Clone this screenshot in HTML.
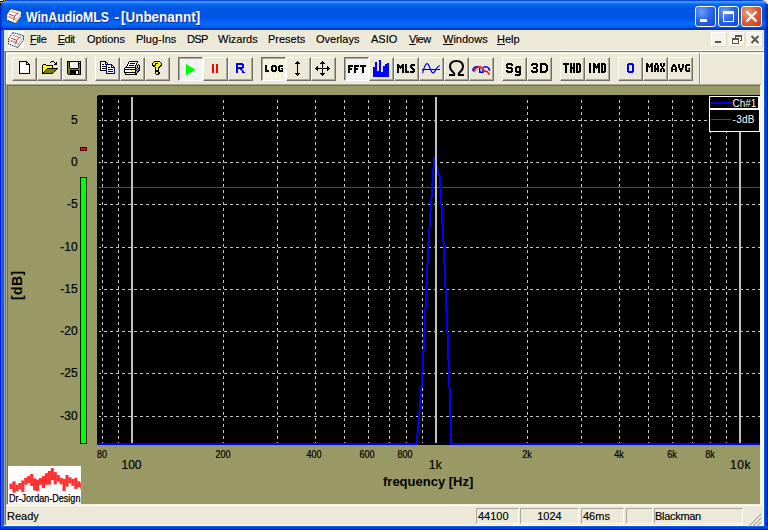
<!DOCTYPE html>
<html><head><meta charset="utf-8"><title>WinAudioMLS</title><style>
*{margin:0;padding:0;box-sizing:border-box}
html,body{width:768px;height:530px;overflow:hidden;background:#0050DC}
body{position:relative;font-family:"Liberation Sans",sans-serif;font-size:11px;color:#000}
.a{position:absolute}
.t{position:absolute;white-space:nowrap;line-height:1}
#title{left:0;top:0;width:768px;height:30px;border-radius:7px 7px 0 0;
background:linear-gradient(#0849DA 0px,#0849DA 0.8px,#3A93FF 1.2px,#3A93FF 2.4px,#1474F8 3.5px,#0662EC 5px,#0057E4 8px,#0055E3 17px,#005CF0 20px,#0268FC 22px,#0268FC 25px,#015CE8 27px,#0038C8 28.5px,#002EBC 30px)}
.btn{position:absolute;top:57px;width:25px;height:24px;background:#ECE9D8;border-top:1px solid #fff;border-left:1px solid #fff;border-bottom:1px solid #716F64;border-right:1px solid #716F64;box-shadow:inset -1px -1px 0 #ACA899}
.btn.dn{border-top:1px solid #716F64;border-left:1px solid #716F64;border-bottom:1px solid #fff;border-right:1px solid #fff;box-shadow:inset 1px 1px 0 #ACA899;background:repeating-conic-gradient(#fff 0 25%,#ECE9D8 0 50%) 0 0/2px 2px}
.btn svg{position:absolute;left:-1px;top:-1px}
.m{position:absolute;top:33px;font-size:11px;line-height:13px;white-space:nowrap;-webkit-text-stroke:0.15px #000}
.m u{text-decoration:underline;text-underline-offset:1px;text-decoration-thickness:1px}
.sp{position:absolute;top:508px;height:16px;border-top:1px solid #ACA899;border-left:1px solid #ACA899;border-bottom:1px solid #fff;border-right:1px solid #fff}
.ax{font-size:12px;-webkit-text-stroke:0.2px #000}
.axs{font-size:10px;transform:scaleX(0.9);transform-origin:50% 0;-webkit-text-stroke:0.2px #000}
</style></head><body>
<div class="a" style="left:0;top:0;width:8px;height:8px;background:#0849DA"></div>
<div class="a" style="left:760px;top:0;width:8px;height:8px;background:#ECE9D8"></div>
<div class="a" id="title"></div>
<div class="a" style="left:0;top:3px;width:3px;height:27px;background:linear-gradient(90deg,rgba(0,25,190,0.85),rgba(0,40,200,0))"></div>
<div class="a" style="left:764px;top:4px;width:4px;height:26px;background:linear-gradient(90deg,rgba(0,30,170,0),rgba(0,20,150,0.9))"></div>
<div class="a" style="left:0px;top:0px;width:3px;height:1px;background:#fff"></div>
<div class="a" style="left:3px;top:0px;width:1px;height:1px;background:#000"></div>
<div class="a" style="left:4px;top:0px;width:1px;height:1px;background:#A89800"></div>
<div class="a" style="left:0px;top:1px;width:3px;height:1px;background:#000"></div>
<div class="a" style="left:0px;top:2px;width:2px;height:1px;background:#A89800"></div>
<div class="a" style="left:0px;top:3px;width:1px;height:2px;background:#000"></div>
<div class="a" style="left:0;top:30px;width:4px;height:500px;background:linear-gradient(90deg,#0019CF 0,#0019CF 1px,#1466EC 1px,#1466EC 3px,#0458E2 3px)"></div>
<div class="a" style="left:764px;top:30px;width:4px;height:500px;background:linear-gradient(90deg,#0A5AE8 0,#0A5AE8 1px,#003CD4 1px,#003CD4 3px,#001E9E 3px)"></div>
<div class="a" style="left:0;top:526px;width:768px;height:4px;background:linear-gradient(#0A5AE8 0,#0A5AE8 1px,#003CD4 1px,#003CD4 3px,#001E9E 3px)"></div>
<div class="a" style="left:0;top:526px;width:1px;height:4px;background:#0019CF"></div>
<div class="a" style="left:4px;top:30px;width:760px;height:496px;background:#ECE9D8"></div>
<div class="a" style="left:4px;top:30px;width:760px;height:1px;background:#F6F2E2"></div>
<div class="a" style="left:4px;top:50px;width:760px;height:1px;background:#fff"></div>
<div class="a" style="left:4px;top:51px;width:760px;height:1px;background:#838172"></div>
<div class="a" style="left:6px;top:53px;width:693px;height:1px;background:#fff"></div>
<div class="a" style="left:6px;top:53px;width:1px;height:31px;background:#fff"></div>
<div class="a" style="left:699px;top:53px;width:1px;height:31px;background:#8E8C7E"></div>
<div class="a" style="left:700px;top:53px;width:1px;height:31px;background:#fff"></div>
<div class="a" style="left:701px;top:53px;width:61px;height:1px;background:#fff"></div>
<div class="a" style="left:4px;top:52px;width:1px;height:474px;background:#ACA899"></div>
<div class="a" style="left:5px;top:52px;width:1px;height:474px;background:#716F64"></div>
<div class="a" style="left:762px;top:52px;width:1px;height:474px;background:#F1EFE2"></div>
<div class="a" style="left:763px;top:52px;width:1px;height:474px;background:#fff"></div>
<div class="a" style="left:4px;top:525px;width:760px;height:1px;background:#fff"></div>
<div class="a" style="left:6px;top:84px;width:756px;height:422px;background:#fff"></div>
<div class="a" style="left:6px;top:84px;width:755px;height:421px;background:#ACA899"></div>
<div class="a" style="left:7px;top:85px;width:754px;height:420px;background:#716F64"></div>
<div class="a" style="left:8px;top:86px;width:752px;height:418px;background:#999966"></div>
<div class="a" style="left:760px;top:85px;width:1px;height:420px;background:#F1EFE2"></div>
<div class="a" style="left:7px;top:504px;width:754px;height:1px;background:#F1EFE2"></div>
<div class="a" style="left:6px;top:505px;width:756px;height:1px;background:#fff"></div>
<svg class="a" style="left:6px;top:8px" width="17" height="17" viewBox="0 0 17 17"><path d="M4.8 0.6 L15.6 3.6 L15.3 8.2 L10 15.6 L0.5 11.9 L0.7 6.4 Z" fill="#fff" stroke="#222" stroke-width="1" stroke-linejoin="round" stroke-dasharray="1.6 0.7"/><path d="M0.9 8.6 L10.3 12.2 L15.2 5.4 M10.3 12.2 L10.1 15.2" stroke="#999" stroke-width="0.8" fill="none"/><path d="M4.6 3.2 L13.2 5.8 M2.6 8.2 L7.4 10" stroke="#888" stroke-width="0.8" fill="none"/><path d="M3 6 L8.6 8.3 L11.8 4.6 M8.6 8.3 L7.5 12.4" stroke="#FF1818" stroke-width="1" fill="none"/></svg>
<div class="t" id="ttl" style="left:26px;top:10px;font-size:14px;font-weight:bold;color:#fff;transform-origin:0 0;text-shadow:1px 1px 0 #0A2A90;transform:scaleX(0.875)">WinAudioMLS</div>
<div class="t" style="left:114.5px;top:10px;font-size:14px;font-weight:bold;color:#fff;transform-origin:0 0;text-shadow:1px 1px 0 #0A2A90;">-</div>
<div class="t" style="left:121px;top:10px;font-size:14px;font-weight:bold;color:#fff;transform-origin:0 0;text-shadow:1px 1px 0 #0A2A90;transform:scaleX(0.96)">[Unbenannt]</div>
<div class="a" style="left:695px;top:6px;width:21px;height:21px;border:1px solid #fff;border-radius:3px;background:radial-gradient(circle at 30% 25%,#6C9CF8 0,#2E66E8 45%,#1444D0 100%)"></div><div class="a" style="left:700px;top:19px;width:7px;height:3px;background:#fff"></div>
<div class="a" style="left:718px;top:6px;width:21px;height:21px;border:1px solid #fff;border-radius:3px;background:radial-gradient(circle at 30% 25%,#6C9CF8 0,#2E66E8 45%,#1444D0 100%)"></div><div class="a" style="left:723px;top:11px;width:11px;height:11px;border:1px solid #fff;border-top:3px solid #fff"></div>
<div class="a" style="left:741px;top:6px;width:21px;height:21px;border:1px solid #fff;border-radius:3px;background:radial-gradient(circle at 30% 30%,#F0A088 0,#E0603C 45%,#C8340E 100%)"></div><svg class="a" style="left:741px;top:6px" width="21" height="21" viewBox="0 0 21 21"><path d="M5.5 5.5 L15.5 15.5 M15.5 5.5 L5.5 15.5" stroke="#fff" stroke-width="2.2" stroke-linecap="butt"/></svg>
<div class="a" style="left:8px;top:31px;width:16px;height:17px;background:#fff"></div>
<svg class="a" style="left:8px;top:32px" width="17" height="17" viewBox="0 0 17 17"><path d="M4.8 0.6 L15.6 3.6 L15.3 8.2 L10 15.6 L0.5 11.9 L0.7 6.4 Z" fill="#fff" stroke="#222" stroke-width="1" stroke-linejoin="round" stroke-dasharray="1.6 0.7"/><path d="M0.9 8.6 L10.3 12.2 L15.2 5.4 M10.3 12.2 L10.1 15.2" stroke="#999" stroke-width="0.8" fill="none"/><path d="M4.6 3.2 L13.2 5.8 M2.6 8.2 L7.4 10" stroke="#888" stroke-width="0.8" fill="none"/><path d="M3 6 L8.6 8.3 L11.8 4.6 M8.6 8.3 L7.5 12.4" stroke="#FF1818" stroke-width="1" fill="none"/></svg>
<div class="m" id="m0" style="left:30px;letter-spacing:-0.3px"><u>F</u>ile</div>
<div class="m" id="m1" style="left:57.7px;letter-spacing:-0.5px"><u>E</u>dit</div>
<div class="m" id="m2" style="left:87px">Options</div>
<div class="m" id="m3" style="left:136px">Plug-Ins</div>
<div class="m" id="m4" style="left:187px;letter-spacing:-0.6px">DSP</div>
<div class="m" id="m5" style="left:218px">Wizards</div>
<div class="m" id="m6" style="left:268px">Presets</div>
<div class="m" id="m7" style="left:316px">Overlays</div>
<div class="m" id="m8" style="left:371px">ASIO</div>
<div class="m" id="m9" style="left:409px;letter-spacing:-0.5px"><u>V</u>iew</div>
<div class="m" id="m10" style="left:443px"><u>W</u>indows</div>
<div class="m" id="m11" style="left:497px"><u>H</u>elp</div>
<div class="a" style="left:711px;top:32px;width:16px;height:15px;background:#F6F4EA;border:1px solid #fff;border-right-color:#E0DCC8;border-bottom-color:#E0DCC8"></div>
<div class="a" style="left:729px;top:32px;width:16px;height:15px;background:#F6F4EA;border:1px solid #fff;border-right-color:#E0DCC8;border-bottom-color:#E0DCC8"></div>
<div class="a" style="left:747px;top:32px;width:16px;height:15px;background:#F6F4EA;border:1px solid #fff;border-right-color:#E0DCC8;border-bottom-color:#E0DCC8"></div>
<div class="a" style="left:715px;top:41px;width:6px;height:2px;background:#555"></div>
<svg class="a" style="left:729px;top:32px" width="16" height="15" viewBox="0 0 16 15"><g fill="none" stroke="#555" stroke-width="1" shape-rendering="crispEdges"><path d="M6.5 5.5 V3.5 H12.5 V8.5 H10.5"/><path d="M6 4.5 H13"/><rect x="3.5" y="6.5" width="6" height="5"/><path d="M3 7.5 H10"/></g></svg>
<svg class="a" style="left:747px;top:32px" width="16" height="15" viewBox="0 0 16 15"><path d="M4.5 4 L11.5 11 M11.5 4 L4.5 11" stroke="#555" stroke-width="2"/></svg>
<div class="btn" id="b12" style="left:12px"><svg width="25" height="24" viewBox="0 0 25 24" shape-rendering="crispEdges"><rect x="7" y="4" width="8" height="1" fill="#000"/><rect x="7" y="5" width="1" height="1" fill="#000"/><rect x="8" y="5" width="6" height="1" fill="#fff"/><rect x="14" y="5" width="2" height="1" fill="#000"/><rect x="7" y="6" width="1" height="1" fill="#000"/><rect x="8" y="6" width="6" height="1" fill="#fff"/><rect x="14" y="6" width="1" height="1" fill="#000"/><rect x="15" y="6" width="1" height="1" fill="#fff"/><rect x="16" y="6" width="1" height="1" fill="#000"/><rect x="7" y="7" width="1" height="1" fill="#000"/><rect x="8" y="7" width="6" height="1" fill="#fff"/><rect x="14" y="7" width="4" height="1" fill="#000"/><rect x="7" y="8" width="1" height="1" fill="#000"/><rect x="8" y="8" width="9" height="1" fill="#fff"/><rect x="17" y="8" width="1" height="1" fill="#000"/><rect x="7" y="9" width="1" height="1" fill="#000"/><rect x="8" y="9" width="9" height="1" fill="#fff"/><rect x="17" y="9" width="1" height="1" fill="#000"/><rect x="7" y="10" width="1" height="1" fill="#000"/><rect x="8" y="10" width="9" height="1" fill="#fff"/><rect x="17" y="10" width="1" height="1" fill="#000"/><rect x="7" y="11" width="1" height="1" fill="#000"/><rect x="8" y="11" width="9" height="1" fill="#fff"/><rect x="17" y="11" width="1" height="1" fill="#000"/><rect x="7" y="12" width="1" height="1" fill="#000"/><rect x="8" y="12" width="9" height="1" fill="#fff"/><rect x="17" y="12" width="1" height="1" fill="#000"/><rect x="7" y="13" width="1" height="1" fill="#000"/><rect x="8" y="13" width="9" height="1" fill="#fff"/><rect x="17" y="13" width="1" height="1" fill="#000"/><rect x="7" y="14" width="1" height="1" fill="#000"/><rect x="8" y="14" width="9" height="1" fill="#fff"/><rect x="17" y="14" width="1" height="1" fill="#000"/><rect x="7" y="15" width="1" height="1" fill="#000"/><rect x="8" y="15" width="9" height="1" fill="#fff"/><rect x="17" y="15" width="1" height="1" fill="#000"/><rect x="7" y="16" width="11" height="1" fill="#000"/></svg></div>
<div class="btn" id="b37" style="left:37px"><svg width="25" height="24" viewBox="0 0 25 24" shape-rendering="crispEdges"><rect x="14" y="4" width="3" height="1" fill="#000"/><rect x="13" y="5" width="1" height="1" fill="#000"/><rect x="17" y="5" width="1" height="1" fill="#000"/><rect x="19" y="5" width="1" height="1" fill="#000"/><rect x="18" y="6" width="2" height="1" fill="#000"/><rect x="6" y="7" width="3" height="1" fill="#000"/><rect x="17" y="7" width="3" height="1" fill="#000"/><rect x="5" y="8" width="1" height="1" fill="#000"/><rect x="6" y="8" width="1" height="1" fill="#FFFF00"/><rect x="7" y="8" width="1" height="1" fill="#fff"/><rect x="8" y="8" width="1" height="1" fill="#FFFF00"/><rect x="9" y="8" width="7" height="1" fill="#000"/><rect x="5" y="9" width="1" height="1" fill="#000"/><rect x="6" y="9" width="1" height="1" fill="#fff"/><rect x="7" y="9" width="1" height="1" fill="#FFFF00"/><rect x="8" y="9" width="1" height="1" fill="#fff"/><rect x="9" y="9" width="1" height="1" fill="#FFFF00"/><rect x="10" y="9" width="1" height="1" fill="#fff"/><rect x="11" y="9" width="1" height="1" fill="#FFFF00"/><rect x="12" y="9" width="1" height="1" fill="#fff"/><rect x="13" y="9" width="1" height="1" fill="#FFFF00"/><rect x="14" y="9" width="1" height="1" fill="#fff"/><rect x="15" y="9" width="1" height="1" fill="#000"/><rect x="5" y="10" width="1" height="1" fill="#000"/><rect x="6" y="10" width="1" height="1" fill="#FFFF00"/><rect x="7" y="10" width="1" height="1" fill="#fff"/><rect x="8" y="10" width="1" height="1" fill="#FFFF00"/><rect x="9" y="10" width="1" height="1" fill="#fff"/><rect x="10" y="10" width="1" height="1" fill="#FFFF00"/><rect x="11" y="10" width="1" height="1" fill="#fff"/><rect x="12" y="10" width="1" height="1" fill="#FFFF00"/><rect x="13" y="10" width="1" height="1" fill="#fff"/><rect x="14" y="10" width="1" height="1" fill="#FFFF00"/><rect x="15" y="10" width="1" height="1" fill="#000"/><rect x="5" y="11" width="1" height="1" fill="#000"/><rect x="6" y="11" width="1" height="1" fill="#fff"/><rect x="7" y="11" width="1" height="1" fill="#FFFF00"/><rect x="8" y="11" width="1" height="1" fill="#fff"/><rect x="9" y="11" width="1" height="1" fill="#FFFF00"/><rect x="10" y="11" width="11" height="1" fill="#000"/><rect x="5" y="12" width="1" height="1" fill="#000"/><rect x="6" y="12" width="1" height="1" fill="#FFFF00"/><rect x="7" y="12" width="1" height="1" fill="#fff"/><rect x="8" y="12" width="1" height="1" fill="#FFFF00"/><rect x="9" y="12" width="1" height="1" fill="#000"/><rect x="10" y="12" width="9" height="1" fill="#808000"/><rect x="19" y="12" width="1" height="1" fill="#000"/><rect x="5" y="13" width="1" height="1" fill="#000"/><rect x="6" y="13" width="1" height="1" fill="#fff"/><rect x="7" y="13" width="1" height="1" fill="#FFFF00"/><rect x="8" y="13" width="1" height="1" fill="#000"/><rect x="9" y="13" width="9" height="1" fill="#808000"/><rect x="18" y="13" width="1" height="1" fill="#000"/><rect x="5" y="14" width="1" height="1" fill="#000"/><rect x="6" y="14" width="1" height="1" fill="#FFFF00"/><rect x="7" y="14" width="1" height="1" fill="#000"/><rect x="8" y="14" width="9" height="1" fill="#808000"/><rect x="17" y="14" width="1" height="1" fill="#000"/><rect x="5" y="15" width="2" height="1" fill="#000"/><rect x="7" y="15" width="9" height="1" fill="#808000"/><rect x="16" y="15" width="1" height="1" fill="#000"/><rect x="5" y="16" width="11" height="1" fill="#000"/></svg></div>
<div class="btn" id="b62" style="left:62px"><svg width="25" height="24" viewBox="0 0 25 24" shape-rendering="crispEdges"><rect x="5" y="4" width="14" height="1" fill="#000"/><rect x="5" y="5" width="1" height="1" fill="#000"/><rect x="6" y="5" width="1" height="1" fill="#808000"/><rect x="7" y="5" width="1" height="1" fill="#000"/><rect x="8" y="5" width="8" height="1" fill="#F4F2EA"/><rect x="16" y="5" width="1" height="1" fill="#000"/><rect x="17" y="5" width="1" height="1" fill="#F4F2EA"/><rect x="18" y="5" width="1" height="1" fill="#000"/><rect x="5" y="6" width="1" height="1" fill="#000"/><rect x="6" y="6" width="1" height="1" fill="#808000"/><rect x="7" y="6" width="1" height="1" fill="#000"/><rect x="8" y="6" width="8" height="1" fill="#F4F2EA"/><rect x="16" y="6" width="3" height="1" fill="#000"/><rect x="5" y="7" width="1" height="1" fill="#000"/><rect x="6" y="7" width="1" height="1" fill="#808000"/><rect x="7" y="7" width="1" height="1" fill="#000"/><rect x="8" y="7" width="8" height="1" fill="#F4F2EA"/><rect x="16" y="7" width="1" height="1" fill="#000"/><rect x="17" y="7" width="1" height="1" fill="#808000"/><rect x="18" y="7" width="1" height="1" fill="#000"/><rect x="5" y="8" width="1" height="1" fill="#000"/><rect x="6" y="8" width="1" height="1" fill="#808000"/><rect x="7" y="8" width="1" height="1" fill="#000"/><rect x="8" y="8" width="8" height="1" fill="#F4F2EA"/><rect x="16" y="8" width="1" height="1" fill="#000"/><rect x="17" y="8" width="1" height="1" fill="#808000"/><rect x="18" y="8" width="1" height="1" fill="#000"/><rect x="5" y="9" width="1" height="1" fill="#000"/><rect x="6" y="9" width="1" height="1" fill="#808000"/><rect x="7" y="9" width="1" height="1" fill="#000"/><rect x="8" y="9" width="8" height="1" fill="#F4F2EA"/><rect x="16" y="9" width="1" height="1" fill="#000"/><rect x="17" y="9" width="1" height="1" fill="#808000"/><rect x="18" y="9" width="1" height="1" fill="#000"/><rect x="5" y="10" width="1" height="1" fill="#000"/><rect x="6" y="10" width="1" height="1" fill="#808000"/><rect x="7" y="10" width="1" height="1" fill="#000"/><rect x="8" y="10" width="8" height="1" fill="#F4F2EA"/><rect x="16" y="10" width="1" height="1" fill="#000"/><rect x="17" y="10" width="1" height="1" fill="#808000"/><rect x="18" y="10" width="1" height="1" fill="#000"/><rect x="5" y="11" width="1" height="1" fill="#000"/><rect x="6" y="11" width="2" height="1" fill="#808000"/><rect x="8" y="11" width="8" height="1" fill="#000"/><rect x="16" y="11" width="2" height="1" fill="#808000"/><rect x="18" y="11" width="1" height="1" fill="#000"/><rect x="5" y="12" width="1" height="1" fill="#000"/><rect x="6" y="12" width="12" height="1" fill="#808000"/><rect x="18" y="12" width="1" height="1" fill="#000"/><rect x="5" y="13" width="1" height="1" fill="#000"/><rect x="6" y="13" width="2" height="1" fill="#808000"/><rect x="8" y="13" width="9" height="1" fill="#000"/><rect x="17" y="13" width="1" height="1" fill="#808000"/><rect x="18" y="13" width="1" height="1" fill="#000"/><rect x="5" y="14" width="1" height="1" fill="#000"/><rect x="6" y="14" width="2" height="1" fill="#808000"/><rect x="8" y="14" width="6" height="1" fill="#000"/><rect x="14" y="14" width="2" height="1" fill="#F4F2EA"/><rect x="16" y="14" width="1" height="1" fill="#000"/><rect x="17" y="14" width="1" height="1" fill="#808000"/><rect x="18" y="14" width="1" height="1" fill="#000"/><rect x="5" y="15" width="1" height="1" fill="#000"/><rect x="6" y="15" width="2" height="1" fill="#808000"/><rect x="8" y="15" width="6" height="1" fill="#000"/><rect x="14" y="15" width="2" height="1" fill="#F4F2EA"/><rect x="16" y="15" width="1" height="1" fill="#000"/><rect x="17" y="15" width="1" height="1" fill="#808000"/><rect x="18" y="15" width="1" height="1" fill="#000"/><rect x="5" y="16" width="1" height="1" fill="#000"/><rect x="6" y="16" width="2" height="1" fill="#808000"/><rect x="8" y="16" width="6" height="1" fill="#000"/><rect x="14" y="16" width="2" height="1" fill="#F4F2EA"/><rect x="16" y="16" width="1" height="1" fill="#000"/><rect x="17" y="16" width="1" height="1" fill="#808000"/><rect x="18" y="16" width="1" height="1" fill="#000"/><rect x="6" y="17" width="13" height="1" fill="#000"/></svg></div>
<div class="btn" id="b95" style="left:95px"><svg width="25" height="24" viewBox="0 0 25 24" shape-rendering="crispEdges"><rect x="5" y="4" width="6" height="1" fill="#000"/><rect x="5" y="5" width="1" height="1" fill="#000"/><rect x="6" y="5" width="4" height="1" fill="#fff"/><rect x="10" y="5" width="2" height="1" fill="#000"/><rect x="5" y="6" width="1" height="1" fill="#000"/><rect x="6" y="6" width="4" height="1" fill="#fff"/><rect x="10" y="6" width="1" height="1" fill="#000"/><rect x="11" y="6" width="1" height="1" fill="#fff"/><rect x="12" y="6" width="1" height="1" fill="#000"/><rect x="5" y="7" width="1" height="1" fill="#000"/><rect x="6" y="7" width="1" height="1" fill="#fff"/><rect x="7" y="7" width="2" height="1" fill="#000"/><rect x="9" y="7" width="1" height="1" fill="#fff"/><rect x="10" y="7" width="1" height="1" fill="#000"/><rect x="11" y="7" width="6" height="1" fill="#000080"/><rect x="5" y="8" width="1" height="1" fill="#000"/><rect x="6" y="8" width="5" height="1" fill="#fff"/><rect x="11" y="8" width="1" height="1" fill="#000080"/><rect x="12" y="8" width="4" height="1" fill="#fff"/><rect x="16" y="8" width="2" height="1" fill="#000080"/><rect x="5" y="9" width="1" height="1" fill="#000"/><rect x="6" y="9" width="1" height="1" fill="#fff"/><rect x="7" y="9" width="4" height="1" fill="#000"/><rect x="11" y="9" width="1" height="1" fill="#000080"/><rect x="12" y="9" width="4" height="1" fill="#fff"/><rect x="16" y="9" width="1" height="1" fill="#000080"/><rect x="17" y="9" width="1" height="1" fill="#fff"/><rect x="18" y="9" width="1" height="1" fill="#000080"/><rect x="5" y="10" width="1" height="1" fill="#000"/><rect x="6" y="10" width="5" height="1" fill="#fff"/><rect x="11" y="10" width="1" height="1" fill="#000080"/><rect x="12" y="10" width="1" height="1" fill="#fff"/><rect x="13" y="10" width="2" height="1" fill="#000"/><rect x="15" y="10" width="1" height="1" fill="#fff"/><rect x="16" y="10" width="4" height="1" fill="#000080"/><rect x="5" y="11" width="1" height="1" fill="#000"/><rect x="6" y="11" width="1" height="1" fill="#fff"/><rect x="7" y="11" width="4" height="1" fill="#000"/><rect x="11" y="11" width="1" height="1" fill="#000080"/><rect x="12" y="11" width="7" height="1" fill="#fff"/><rect x="19" y="11" width="1" height="1" fill="#000080"/><rect x="5" y="12" width="1" height="1" fill="#000"/><rect x="6" y="12" width="5" height="1" fill="#fff"/><rect x="11" y="12" width="1" height="1" fill="#000080"/><rect x="12" y="12" width="1" height="1" fill="#fff"/><rect x="13" y="12" width="5" height="1" fill="#000"/><rect x="18" y="12" width="1" height="1" fill="#fff"/><rect x="19" y="12" width="1" height="1" fill="#000080"/><rect x="5" y="13" width="6" height="1" fill="#000"/><rect x="11" y="13" width="1" height="1" fill="#000080"/><rect x="12" y="13" width="7" height="1" fill="#fff"/><rect x="19" y="13" width="1" height="1" fill="#000080"/><rect x="11" y="14" width="1" height="1" fill="#000080"/><rect x="12" y="14" width="1" height="1" fill="#fff"/><rect x="13" y="14" width="5" height="1" fill="#000"/><rect x="18" y="14" width="1" height="1" fill="#fff"/><rect x="19" y="14" width="1" height="1" fill="#000080"/><rect x="11" y="15" width="1" height="1" fill="#000080"/><rect x="12" y="15" width="7" height="1" fill="#fff"/><rect x="19" y="15" width="1" height="1" fill="#000080"/><rect x="11" y="16" width="9" height="1" fill="#000080"/></svg></div>
<div class="btn" id="b120" style="left:120px"><svg width="25" height="24" viewBox="0 0 25 24" shape-rendering="crispEdges"><rect x="9" y="4" width="9" height="1" fill="#000"/><rect x="8" y="5" width="1" height="1" fill="#000"/><rect x="9" y="5" width="8" height="1" fill="#fff"/><rect x="17" y="5" width="1" height="1" fill="#000"/><rect x="8" y="6" width="1" height="1" fill="#000"/><rect x="9" y="6" width="1" height="1" fill="#fff"/><rect x="10" y="6" width="5" height="1" fill="#000"/><rect x="15" y="6" width="1" height="1" fill="#fff"/><rect x="16" y="6" width="1" height="1" fill="#000"/><rect x="7" y="7" width="1" height="1" fill="#000"/><rect x="8" y="7" width="8" height="1" fill="#fff"/><rect x="16" y="7" width="1" height="1" fill="#000"/><rect x="18" y="7" width="1" height="1" fill="#000"/><rect x="7" y="8" width="1" height="1" fill="#000"/><rect x="8" y="8" width="1" height="1" fill="#fff"/><rect x="9" y="8" width="5" height="1" fill="#000"/><rect x="14" y="8" width="1" height="1" fill="#fff"/><rect x="15" y="8" width="1" height="1" fill="#000"/><rect x="16" y="8" width="1" height="1" fill="#C8C8C0"/><rect x="17" y="8" width="1" height="1" fill="#000"/><rect x="18" y="8" width="1" height="1" fill="#C8C8C0"/><rect x="19" y="8" width="1" height="1" fill="#000"/><rect x="6" y="9" width="1" height="1" fill="#000"/><rect x="7" y="9" width="8" height="1" fill="#fff"/><rect x="15" y="9" width="1" height="1" fill="#000"/><rect x="16" y="9" width="1" height="1" fill="#C8C8C0"/><rect x="17" y="9" width="1" height="1" fill="#000"/><rect x="18" y="9" width="1" height="1" fill="#C8C8C0"/><rect x="19" y="9" width="1" height="1" fill="#000"/><rect x="5" y="10" width="11" height="1" fill="#000"/><rect x="16" y="10" width="1" height="1" fill="#C8C8C0"/><rect x="17" y="10" width="1" height="1" fill="#000"/><rect x="18" y="10" width="1" height="1" fill="#C8C8C0"/><rect x="19" y="10" width="1" height="1" fill="#000"/><rect x="4" y="11" width="1" height="1" fill="#000"/><rect x="5" y="11" width="10" height="1" fill="#F6F4EA"/><rect x="15" y="11" width="2" height="1" fill="#000"/><rect x="17" y="11" width="1" height="1" fill="#C8C8C0"/><rect x="18" y="11" width="2" height="1" fill="#000"/><rect x="4" y="12" width="12" height="1" fill="#000"/><rect x="16" y="12" width="1" height="1" fill="#C8C8C0"/><rect x="17" y="12" width="1" height="1" fill="#000"/><rect x="18" y="12" width="1" height="1" fill="#C8C8C0"/><rect x="19" y="12" width="1" height="1" fill="#000"/><rect x="4" y="13" width="1" height="1" fill="#000"/><rect x="5" y="13" width="6" height="1" fill="#fff"/><rect x="11" y="13" width="3" height="1" fill="#FFFF00"/><rect x="14" y="13" width="1" height="1" fill="#fff"/><rect x="15" y="13" width="2" height="1" fill="#000"/><rect x="17" y="13" width="1" height="1" fill="#C8C8C0"/><rect x="18" y="13" width="2" height="1" fill="#000"/><rect x="4" y="14" width="1" height="1" fill="#000"/><rect x="5" y="14" width="6" height="1" fill="#fff"/><rect x="11" y="14" width="3" height="1" fill="#FFFF00"/><rect x="14" y="14" width="1" height="1" fill="#fff"/><rect x="15" y="14" width="1" height="1" fill="#000"/><rect x="16" y="14" width="1" height="1" fill="#C8C8C0"/><rect x="17" y="14" width="2" height="1" fill="#000"/><rect x="4" y="15" width="12" height="1" fill="#000"/><rect x="16" y="15" width="1" height="1" fill="#C8C8C0"/><rect x="17" y="15" width="1" height="1" fill="#000"/><rect x="5" y="16" width="1" height="1" fill="#000"/><rect x="6" y="16" width="9" height="1" fill="#F6F4EA"/><rect x="15" y="16" width="2" height="1" fill="#000"/><rect x="5" y="17" width="12" height="1" fill="#000"/></svg></div>
<div class="btn" id="b145" style="left:145px"><svg width="25" height="24" viewBox="0 0 25 24" shape-rendering="crispEdges"><rect x="9" y="4" width="6" height="1" fill="#000"/><rect x="8" y="5" width="1" height="1" fill="#000"/><rect x="9" y="5" width="6" height="1" fill="#FFFF00"/><rect x="15" y="5" width="1" height="1" fill="#000"/><rect x="7" y="6" width="1" height="1" fill="#000"/><rect x="8" y="6" width="2" height="1" fill="#FFFF00"/><rect x="10" y="6" width="3" height="1" fill="#000"/><rect x="13" y="6" width="3" height="1" fill="#FFFF00"/><rect x="16" y="6" width="1" height="1" fill="#000"/><rect x="7" y="7" width="1" height="1" fill="#000"/><rect x="8" y="7" width="2" height="1" fill="#FFFF00"/><rect x="10" y="7" width="1" height="1" fill="#000"/><rect x="13" y="7" width="3" height="1" fill="#FFFF00"/><rect x="16" y="7" width="1" height="1" fill="#000"/><rect x="7" y="8" width="4" height="1" fill="#000"/><rect x="12" y="8" width="3" height="1" fill="#FFFF00"/><rect x="15" y="8" width="2" height="1" fill="#000"/><rect x="8" y="9" width="2" height="1" fill="#000"/><rect x="11" y="9" width="3" height="1" fill="#FFFF00"/><rect x="14" y="9" width="2" height="1" fill="#000"/><rect x="10" y="10" width="1" height="1" fill="#000"/><rect x="11" y="10" width="2" height="1" fill="#FFFF00"/><rect x="13" y="10" width="2" height="1" fill="#000"/><rect x="10" y="11" width="1" height="1" fill="#000"/><rect x="11" y="11" width="2" height="1" fill="#FFFF00"/><rect x="13" y="11" width="1" height="1" fill="#000"/><rect x="10" y="12" width="1" height="1" fill="#000"/><rect x="11" y="12" width="2" height="1" fill="#FFFF00"/><rect x="13" y="12" width="1" height="1" fill="#000"/><rect x="10" y="13" width="4" height="1" fill="#000"/><rect x="10" y="14" width="4" height="1" fill="#000"/><rect x="10" y="15" width="1" height="1" fill="#000"/><rect x="11" y="15" width="2" height="1" fill="#FFFF00"/><rect x="13" y="15" width="2" height="1" fill="#000"/><rect x="10" y="16" width="1" height="1" fill="#000"/><rect x="11" y="16" width="2" height="1" fill="#FFFF00"/><rect x="13" y="16" width="2" height="1" fill="#000"/><rect x="11" y="17" width="3" height="1" fill="#000"/></svg></div>
<div class="btn dn" id="b178" style="left:178px"><svg width="25" height="24" viewBox="0 0 25 24" shape-rendering="crispEdges"><path d="M8 7 L8 18.6 L17.6 12.8 Z" fill="#00FF00" shape-rendering="geometricPrecision"/></svg></div>
<div class="btn" id="b203" style="left:203px"><svg width="25" height="24" viewBox="0 0 25 24" shape-rendering="crispEdges"><rect x="9" y="7" width="2" height="9" fill="#FF0000"/><rect x="13" y="7" width="2" height="9" fill="#FF0000"/></svg></div>
<div class="btn" id="b228" style="left:228px"><svg width="25" height="24" viewBox="0 0 25 24" shape-rendering="crispEdges"><rect x="8" y="6" width="7" height="1" fill="#0000FF"/><rect x="8" y="7" width="8" height="1" fill="#0000FF"/><rect x="8" y="8" width="2" height="1" fill="#0000FF"/><rect x="14" y="8" width="2" height="1" fill="#0000FF"/><rect x="8" y="9" width="2" height="1" fill="#0000FF"/><rect x="14" y="9" width="2" height="1" fill="#0000FF"/><rect x="8" y="10" width="8" height="1" fill="#0000FF"/><rect x="8" y="11" width="7" height="1" fill="#0000FF"/><rect x="8" y="12" width="2" height="1" fill="#0000FF"/><rect x="12" y="12" width="2" height="1" fill="#0000FF"/><rect x="8" y="13" width="2" height="1" fill="#0000FF"/><rect x="13" y="13" width="2" height="1" fill="#0000FF"/><rect x="8" y="14" width="2" height="1" fill="#0000FF"/><rect x="14" y="14" width="2" height="1" fill="#0000FF"/><rect x="8" y="15" width="2" height="1" fill="#0000FF"/><rect x="14" y="15" width="3" height="1" fill="#0000FF"/></svg></div>
<div class="btn dn" id="b261" style="left:261px"><svg width="25" height="24" viewBox="0 0 25 24" shape-rendering="crispEdges"><rect x="4" y="8" width="2" height="1" fill="#000"/><rect x="4" y="9" width="2" height="1" fill="#000"/><rect x="4" y="10" width="2" height="1" fill="#000"/><rect x="4" y="11" width="2" height="1" fill="#000"/><rect x="4" y="12" width="2" height="1" fill="#000"/><rect x="4" y="13" width="4" height="1" fill="#000"/><rect x="4" y="14" width="4" height="1" fill="#000"/><rect x="11" y="8" width="4" height="1" fill="#000"/><rect x="10" y="9" width="6" height="1" fill="#000"/><rect x="10" y="10" width="2" height="1" fill="#000"/><rect x="14" y="10" width="2" height="1" fill="#000"/><rect x="10" y="11" width="2" height="1" fill="#000"/><rect x="14" y="11" width="2" height="1" fill="#000"/><rect x="10" y="12" width="2" height="1" fill="#000"/><rect x="14" y="12" width="2" height="1" fill="#000"/><rect x="10" y="13" width="6" height="1" fill="#000"/><rect x="11" y="14" width="4" height="1" fill="#000"/><rect x="18" y="8" width="4" height="1" fill="#000"/><rect x="17" y="9" width="5" height="1" fill="#000"/><rect x="17" y="10" width="2" height="1" fill="#000"/><rect x="17" y="11" width="2" height="1" fill="#000"/><rect x="20" y="11" width="2" height="1" fill="#000"/><rect x="17" y="12" width="2" height="1" fill="#000"/><rect x="21" y="12" width="1" height="1" fill="#000"/><rect x="17" y="13" width="5" height="1" fill="#000"/><rect x="18" y="14" width="4" height="1" fill="#000"/></svg></div>
<div class="btn" id="b286" style="left:286px"><svg width="25" height="24" viewBox="0 0 25 24" shape-rendering="crispEdges"><rect x="11" y="4" width="1" height="1" fill="#000"/><rect x="10" y="5" width="3" height="1" fill="#000"/><rect x="9" y="6" width="5" height="1" fill="#000"/><rect x="11" y="7" width="1" height="1" fill="#000"/><rect x="11" y="8" width="1" height="1" fill="#000"/><rect x="11" y="9" width="1" height="1" fill="#000"/><rect x="11" y="10" width="1" height="1" fill="#000"/><rect x="11" y="11" width="1" height="1" fill="#000"/><rect x="11" y="12" width="1" height="1" fill="#000"/><rect x="11" y="13" width="1" height="1" fill="#000"/><rect x="11" y="14" width="1" height="1" fill="#000"/><rect x="11" y="15" width="1" height="1" fill="#000"/><rect x="9" y="16" width="5" height="1" fill="#000"/><rect x="10" y="17" width="3" height="1" fill="#000"/><rect x="11" y="18" width="1" height="1" fill="#000"/></svg></div>
<div class="btn" id="b311" style="left:311px"><svg width="25" height="24" viewBox="0 0 25 24" shape-rendering="crispEdges"><rect x="11" y="4" width="1" height="1" fill="#000"/><rect x="10" y="5" width="3" height="1" fill="#000"/><rect x="9" y="6" width="5" height="1" fill="#000"/><rect x="11" y="7" width="1" height="1" fill="#000"/><rect x="11" y="8" width="1" height="1" fill="#000"/><rect x="6" y="9" width="1" height="1" fill="#000"/><rect x="11" y="9" width="1" height="1" fill="#000"/><rect x="16" y="9" width="1" height="1" fill="#000"/><rect x="5" y="10" width="2" height="1" fill="#000"/><rect x="11" y="10" width="1" height="1" fill="#000"/><rect x="16" y="10" width="2" height="1" fill="#000"/><rect x="4" y="11" width="15" height="1" fill="#000"/><rect x="5" y="12" width="2" height="1" fill="#000"/><rect x="11" y="12" width="1" height="1" fill="#000"/><rect x="16" y="12" width="2" height="1" fill="#000"/><rect x="6" y="13" width="1" height="1" fill="#000"/><rect x="11" y="13" width="1" height="1" fill="#000"/><rect x="16" y="13" width="1" height="1" fill="#000"/><rect x="11" y="14" width="1" height="1" fill="#000"/><rect x="11" y="15" width="1" height="1" fill="#000"/><rect x="9" y="16" width="5" height="1" fill="#000"/><rect x="10" y="17" width="3" height="1" fill="#000"/><rect x="11" y="18" width="1" height="1" fill="#000"/></svg></div>
<div class="btn dn" id="b344" style="left:344px"><svg width="25" height="24" viewBox="0 0 25 24" shape-rendering="crispEdges"><rect x="4" y="8" width="5" height="1" fill="#000"/><rect x="4" y="9" width="5" height="1" fill="#000"/><rect x="4" y="10" width="2" height="1" fill="#000"/><rect x="4" y="11" width="4" height="1" fill="#000"/><rect x="4" y="12" width="4" height="1" fill="#000"/><rect x="4" y="13" width="2" height="1" fill="#000"/><rect x="4" y="14" width="2" height="1" fill="#000"/><rect x="4" y="15" width="2" height="1" fill="#000"/><rect x="10" y="8" width="5" height="1" fill="#000"/><rect x="10" y="9" width="5" height="1" fill="#000"/><rect x="10" y="10" width="2" height="1" fill="#000"/><rect x="10" y="11" width="4" height="1" fill="#000"/><rect x="10" y="12" width="4" height="1" fill="#000"/><rect x="10" y="13" width="2" height="1" fill="#000"/><rect x="10" y="14" width="2" height="1" fill="#000"/><rect x="10" y="15" width="2" height="1" fill="#000"/><rect x="16" y="8" width="6" height="1" fill="#000"/><rect x="16" y="9" width="6" height="1" fill="#000"/><rect x="18" y="10" width="2" height="1" fill="#000"/><rect x="18" y="11" width="2" height="1" fill="#000"/><rect x="18" y="12" width="2" height="1" fill="#000"/><rect x="18" y="13" width="2" height="1" fill="#000"/><rect x="18" y="14" width="2" height="1" fill="#000"/><rect x="18" y="15" width="2" height="1" fill="#000"/></svg></div>
<div class="btn" id="b369" style="left:369px"><svg width="25" height="24" viewBox="0 0 25 24" shape-rendering="crispEdges"><rect x="4" y="10" width="2" height="10" fill="#0000FF"/><rect x="6" y="5" width="2" height="15" fill="#0000FF"/><rect x="8" y="14" width="2" height="6" fill="#0000FF"/><rect x="10" y="3" width="2" height="17" fill="#0000FF"/><rect x="12" y="15" width="2" height="5" fill="#0000FF"/><rect x="14" y="9" width="2" height="11" fill="#0000FF"/><rect x="16" y="7" width="2" height="13" fill="#0000FF"/><rect x="18" y="6" width="2" height="14" fill="#0000FF"/></svg></div>
<div class="btn" id="b394" style="left:394px"><svg width="25" height="24" viewBox="0 0 25 24" shape-rendering="crispEdges"><rect x="3" y="7" width="2" height="1" fill="#000"/><rect x="8" y="7" width="2" height="1" fill="#000"/><rect x="3" y="8" width="3" height="1" fill="#000"/><rect x="7" y="8" width="3" height="1" fill="#000"/><rect x="3" y="9" width="7" height="1" fill="#000"/><rect x="3" y="10" width="7" height="1" fill="#000"/><rect x="3" y="11" width="2" height="1" fill="#000"/><rect x="6" y="11" width="1" height="1" fill="#000"/><rect x="8" y="11" width="2" height="1" fill="#000"/><rect x="3" y="12" width="2" height="1" fill="#000"/><rect x="8" y="12" width="2" height="1" fill="#000"/><rect x="3" y="13" width="2" height="1" fill="#000"/><rect x="8" y="13" width="2" height="1" fill="#000"/><rect x="3" y="14" width="2" height="1" fill="#000"/><rect x="8" y="14" width="2" height="1" fill="#000"/><rect x="3" y="15" width="2" height="1" fill="#000"/><rect x="8" y="15" width="2" height="1" fill="#000"/><rect x="11" y="7" width="2" height="1" fill="#000"/><rect x="11" y="8" width="2" height="1" fill="#000"/><rect x="11" y="9" width="2" height="1" fill="#000"/><rect x="11" y="10" width="2" height="1" fill="#000"/><rect x="11" y="11" width="2" height="1" fill="#000"/><rect x="11" y="12" width="2" height="1" fill="#000"/><rect x="11" y="13" width="2" height="1" fill="#000"/><rect x="11" y="14" width="4" height="1" fill="#000"/><rect x="11" y="15" width="4" height="1" fill="#000"/><rect x="17" y="7" width="4" height="1" fill="#000"/><rect x="16" y="8" width="5" height="1" fill="#000"/><rect x="16" y="9" width="2" height="1" fill="#000"/><rect x="16" y="10" width="3" height="1" fill="#000"/><rect x="17" y="11" width="3" height="1" fill="#000"/><rect x="18" y="12" width="3" height="1" fill="#000"/><rect x="19" y="13" width="2" height="1" fill="#000"/><rect x="16" y="14" width="5" height="1" fill="#000"/><rect x="16" y="15" width="4" height="1" fill="#000"/></svg></div>
<div class="btn" id="b419" style="left:419px"><svg width="25" height="24" viewBox="0 0 25 24" shape-rendering="crispEdges"><rect x="3" y="12" width="18" height="1" fill="#000"/><g shape-rendering="geometricPrecision" fill="none"><path d="M3.5 16 C4.5 13 6 6.6 8 6.6 C10.5 6.6 11.5 15.8 14 15.8 C16.5 15.8 17 9.5 20.8 8.5" stroke="#0000FF" stroke-width="1.25"/></g></svg></div>
<div class="btn" id="b444" style="left:444px"><svg width="25" height="24" viewBox="0 0 25 24" shape-rendering="crispEdges"><rect x="5" y="17" width="6" height="2" fill="#000"/><rect x="14" y="17" width="6" height="2" fill="#000"/><path shape-rendering="geometricPrecision" d="M10.5 17.5 C10.5 15 6 14.2 6 9.8 C6 5.8 9 4 12.5 4 C16 4 19 5.8 19 9.8 C19 14.2 14.5 15 14.5 17.5" fill="none" stroke="#000" stroke-width="2"/></svg></div>
<div class="btn" id="b469" style="left:469px"><svg width="25" height="24" viewBox="0 0 25 24" shape-rendering="crispEdges"><g shape-rendering="geometricPrecision" fill="none" stroke-width="1.5"><path d="M3.7 13.8 C4 11.5 5.5 9.8 8 9.7 H10 M10.7 11 V15.3 H14 V11.5 M14.3 10.6 C15.5 9.5 18 9.2 19.5 11 C20 11.8 20.5 12.8 20.7 13.8" stroke="#0000FF"/><path d="M4.5 14.8 L8 10 H12 C13.5 10.5 13.8 13.2 15.5 14 C16.5 14.3 17.5 14.2 18 14.5 L20.6 17.6" stroke="#FF0000"/></g></svg></div>
<div class="btn" id="b502" style="left:502px"><svg width="25" height="24" viewBox="0 0 25 24" shape-rendering="crispEdges"><rect x="5" y="6" width="5" height="1" fill="#000"/><rect x="4" y="7" width="7" height="1" fill="#000"/><rect x="4" y="8" width="2" height="1" fill="#000"/><rect x="9" y="8" width="2" height="1" fill="#000"/><rect x="4" y="9" width="2" height="1" fill="#000"/><rect x="4" y="10" width="6" height="1" fill="#000"/><rect x="5" y="11" width="6" height="1" fill="#000"/><rect x="9" y="12" width="2" height="1" fill="#000"/><rect x="4" y="13" width="2" height="1" fill="#000"/><rect x="9" y="13" width="2" height="1" fill="#000"/><rect x="4" y="14" width="7" height="1" fill="#000"/><rect x="5" y="15" width="5" height="1" fill="#000"/><rect x="14" y="9" width="5" height="1" fill="#000"/><rect x="13" y="10" width="6" height="1" fill="#000"/><rect x="13" y="11" width="2" height="1" fill="#000"/><rect x="17" y="11" width="2" height="1" fill="#000"/><rect x="13" y="12" width="2" height="1" fill="#000"/><rect x="17" y="12" width="2" height="1" fill="#000"/><rect x="13" y="13" width="2" height="1" fill="#000"/><rect x="17" y="13" width="2" height="1" fill="#000"/><rect x="13" y="14" width="6" height="1" fill="#000"/><rect x="14" y="15" width="5" height="1" fill="#000"/><rect x="17" y="16" width="2" height="1" fill="#000"/><rect x="13" y="17" width="6" height="1" fill="#000"/><rect x="13" y="18" width="5" height="1" fill="#000"/></svg></div>
<div class="btn" id="b527" style="left:527px"><svg width="25" height="24" viewBox="0 0 25 24" shape-rendering="crispEdges"><rect x="5" y="6" width="5" height="1" fill="#000"/><rect x="4" y="7" width="7" height="1" fill="#000"/><rect x="4" y="8" width="2" height="1" fill="#000"/><rect x="9" y="8" width="2" height="1" fill="#000"/><rect x="9" y="9" width="2" height="1" fill="#000"/><rect x="6" y="10" width="4" height="1" fill="#000"/><rect x="6" y="11" width="4" height="1" fill="#000"/><rect x="9" y="12" width="2" height="1" fill="#000"/><rect x="4" y="13" width="2" height="1" fill="#000"/><rect x="9" y="13" width="2" height="1" fill="#000"/><rect x="4" y="14" width="7" height="1" fill="#000"/><rect x="5" y="15" width="5" height="1" fill="#000"/><rect x="13" y="6" width="6" height="1" fill="#000"/><rect x="13" y="7" width="7" height="1" fill="#000"/><rect x="13" y="8" width="2" height="1" fill="#000"/><rect x="18" y="8" width="3" height="1" fill="#000"/><rect x="13" y="9" width="2" height="1" fill="#000"/><rect x="19" y="9" width="2" height="1" fill="#000"/><rect x="13" y="10" width="2" height="1" fill="#000"/><rect x="19" y="10" width="2" height="1" fill="#000"/><rect x="13" y="11" width="2" height="1" fill="#000"/><rect x="19" y="11" width="2" height="1" fill="#000"/><rect x="13" y="12" width="2" height="1" fill="#000"/><rect x="19" y="12" width="2" height="1" fill="#000"/><rect x="13" y="13" width="2" height="1" fill="#000"/><rect x="18" y="13" width="3" height="1" fill="#000"/><rect x="13" y="14" width="7" height="1" fill="#000"/><rect x="13" y="15" width="6" height="1" fill="#000"/></svg></div>
<div class="btn" id="b560" style="left:560px"><svg width="25" height="24" viewBox="0 0 25 24" shape-rendering="crispEdges"><rect x="3" y="6" width="6" height="1" fill="#000"/><rect x="3" y="7" width="6" height="1" fill="#000"/><rect x="5" y="8" width="2" height="1" fill="#000"/><rect x="5" y="9" width="2" height="1" fill="#000"/><rect x="5" y="10" width="2" height="1" fill="#000"/><rect x="5" y="11" width="2" height="1" fill="#000"/><rect x="5" y="12" width="2" height="1" fill="#000"/><rect x="5" y="13" width="2" height="1" fill="#000"/><rect x="5" y="14" width="2" height="1" fill="#000"/><rect x="5" y="15" width="2" height="1" fill="#000"/><rect x="10" y="6" width="2" height="1" fill="#000"/><rect x="13" y="6" width="2" height="1" fill="#000"/><rect x="10" y="7" width="2" height="1" fill="#000"/><rect x="13" y="7" width="2" height="1" fill="#000"/><rect x="10" y="8" width="2" height="1" fill="#000"/><rect x="13" y="8" width="2" height="1" fill="#000"/><rect x="10" y="9" width="2" height="1" fill="#000"/><rect x="13" y="9" width="2" height="1" fill="#000"/><rect x="10" y="10" width="5" height="1" fill="#000"/><rect x="10" y="11" width="5" height="1" fill="#000"/><rect x="10" y="12" width="2" height="1" fill="#000"/><rect x="13" y="12" width="2" height="1" fill="#000"/><rect x="10" y="13" width="2" height="1" fill="#000"/><rect x="13" y="13" width="2" height="1" fill="#000"/><rect x="10" y="14" width="2" height="1" fill="#000"/><rect x="13" y="14" width="2" height="1" fill="#000"/><rect x="10" y="15" width="2" height="1" fill="#000"/><rect x="13" y="15" width="2" height="1" fill="#000"/><rect x="16" y="6" width="4" height="1" fill="#000"/><rect x="16" y="7" width="5" height="1" fill="#000"/><rect x="16" y="8" width="2" height="1" fill="#000"/><rect x="19" y="8" width="2" height="1" fill="#000"/><rect x="16" y="9" width="2" height="1" fill="#000"/><rect x="19" y="9" width="2" height="1" fill="#000"/><rect x="16" y="10" width="2" height="1" fill="#000"/><rect x="19" y="10" width="2" height="1" fill="#000"/><rect x="16" y="11" width="2" height="1" fill="#000"/><rect x="19" y="11" width="2" height="1" fill="#000"/><rect x="16" y="12" width="2" height="1" fill="#000"/><rect x="19" y="12" width="2" height="1" fill="#000"/><rect x="16" y="13" width="2" height="1" fill="#000"/><rect x="19" y="13" width="2" height="1" fill="#000"/><rect x="16" y="14" width="5" height="1" fill="#000"/><rect x="16" y="15" width="4" height="1" fill="#000"/></svg></div>
<div class="btn" id="b585" style="left:585px"><svg width="25" height="24" viewBox="0 0 25 24" shape-rendering="crispEdges"><rect x="4" y="6" width="2" height="1" fill="#000"/><rect x="4" y="7" width="2" height="1" fill="#000"/><rect x="4" y="8" width="2" height="1" fill="#000"/><rect x="4" y="9" width="2" height="1" fill="#000"/><rect x="4" y="10" width="2" height="1" fill="#000"/><rect x="4" y="11" width="2" height="1" fill="#000"/><rect x="4" y="12" width="2" height="1" fill="#000"/><rect x="4" y="13" width="2" height="1" fill="#000"/><rect x="4" y="14" width="2" height="1" fill="#000"/><rect x="4" y="15" width="2" height="1" fill="#000"/><rect x="8" y="6" width="2" height="1" fill="#000"/><rect x="13" y="6" width="2" height="1" fill="#000"/><rect x="8" y="7" width="3" height="1" fill="#000"/><rect x="12" y="7" width="3" height="1" fill="#000"/><rect x="8" y="8" width="3" height="1" fill="#000"/><rect x="12" y="8" width="3" height="1" fill="#000"/><rect x="8" y="9" width="7" height="1" fill="#000"/><rect x="8" y="10" width="7" height="1" fill="#000"/><rect x="8" y="11" width="2" height="1" fill="#000"/><rect x="11" y="11" width="1" height="1" fill="#000"/><rect x="13" y="11" width="2" height="1" fill="#000"/><rect x="8" y="12" width="2" height="1" fill="#000"/><rect x="13" y="12" width="2" height="1" fill="#000"/><rect x="8" y="13" width="2" height="1" fill="#000"/><rect x="13" y="13" width="2" height="1" fill="#000"/><rect x="8" y="14" width="2" height="1" fill="#000"/><rect x="13" y="14" width="2" height="1" fill="#000"/><rect x="8" y="15" width="2" height="1" fill="#000"/><rect x="13" y="15" width="2" height="1" fill="#000"/><rect x="16" y="6" width="4" height="1" fill="#000"/><rect x="16" y="7" width="5" height="1" fill="#000"/><rect x="16" y="8" width="2" height="1" fill="#000"/><rect x="19" y="8" width="2" height="1" fill="#000"/><rect x="16" y="9" width="2" height="1" fill="#000"/><rect x="19" y="9" width="2" height="1" fill="#000"/><rect x="16" y="10" width="2" height="1" fill="#000"/><rect x="19" y="10" width="2" height="1" fill="#000"/><rect x="16" y="11" width="2" height="1" fill="#000"/><rect x="19" y="11" width="2" height="1" fill="#000"/><rect x="16" y="12" width="2" height="1" fill="#000"/><rect x="19" y="12" width="2" height="1" fill="#000"/><rect x="16" y="13" width="2" height="1" fill="#000"/><rect x="19" y="13" width="2" height="1" fill="#000"/><rect x="16" y="14" width="5" height="1" fill="#000"/><rect x="16" y="15" width="4" height="1" fill="#000"/></svg></div>
<div class="btn" id="b618" style="left:618px"><svg width="25" height="24" viewBox="0 0 25 24" shape-rendering="crispEdges"><rect x="10" y="6" width="5" height="1" fill="#0000FF"/><rect x="9" y="7" width="7" height="1" fill="#0000FF"/><rect x="9" y="8" width="2" height="1" fill="#0000FF"/><rect x="14" y="8" width="2" height="1" fill="#0000FF"/><rect x="9" y="9" width="2" height="1" fill="#0000FF"/><rect x="14" y="9" width="2" height="1" fill="#0000FF"/><rect x="9" y="10" width="2" height="1" fill="#0000FF"/><rect x="14" y="10" width="2" height="1" fill="#0000FF"/><rect x="9" y="11" width="2" height="1" fill="#0000FF"/><rect x="14" y="11" width="2" height="1" fill="#0000FF"/><rect x="9" y="12" width="2" height="1" fill="#0000FF"/><rect x="14" y="12" width="2" height="1" fill="#0000FF"/><rect x="9" y="13" width="2" height="1" fill="#0000FF"/><rect x="14" y="13" width="2" height="1" fill="#0000FF"/><rect x="9" y="14" width="7" height="1" fill="#0000FF"/><rect x="10" y="15" width="5" height="1" fill="#0000FF"/></svg></div>
<div class="btn" id="b643" style="left:643px"><svg width="25" height="24" viewBox="0 0 25 24" shape-rendering="crispEdges"><rect x="3" y="6" width="2" height="1" fill="#000"/><rect x="8" y="6" width="2" height="1" fill="#000"/><rect x="3" y="7" width="3" height="1" fill="#000"/><rect x="7" y="7" width="3" height="1" fill="#000"/><rect x="3" y="8" width="3" height="1" fill="#000"/><rect x="7" y="8" width="3" height="1" fill="#000"/><rect x="3" y="9" width="7" height="1" fill="#000"/><rect x="3" y="10" width="2" height="1" fill="#000"/><rect x="6" y="10" width="1" height="1" fill="#000"/><rect x="8" y="10" width="2" height="1" fill="#000"/><rect x="3" y="11" width="2" height="1" fill="#000"/><rect x="8" y="11" width="2" height="1" fill="#000"/><rect x="3" y="12" width="2" height="1" fill="#000"/><rect x="8" y="12" width="2" height="1" fill="#000"/><rect x="3" y="13" width="2" height="1" fill="#000"/><rect x="8" y="13" width="2" height="1" fill="#000"/><rect x="3" y="14" width="2" height="1" fill="#000"/><rect x="8" y="14" width="2" height="1" fill="#000"/><rect x="12" y="6" width="3" height="1" fill="#000"/><rect x="12" y="7" width="3" height="1" fill="#000"/><rect x="11" y="8" width="2" height="1" fill="#000"/><rect x="14" y="8" width="2" height="1" fill="#000"/><rect x="11" y="9" width="2" height="1" fill="#000"/><rect x="14" y="9" width="2" height="1" fill="#000"/><rect x="11" y="10" width="2" height="1" fill="#000"/><rect x="14" y="10" width="2" height="1" fill="#000"/><rect x="11" y="11" width="5" height="1" fill="#000"/><rect x="11" y="12" width="5" height="1" fill="#000"/><rect x="11" y="13" width="2" height="1" fill="#000"/><rect x="14" y="13" width="2" height="1" fill="#000"/><rect x="11" y="14" width="2" height="1" fill="#000"/><rect x="14" y="14" width="2" height="1" fill="#000"/><rect x="17" y="6" width="2" height="1" fill="#000"/><rect x="20" y="6" width="2" height="1" fill="#000"/><rect x="17" y="7" width="2" height="1" fill="#000"/><rect x="20" y="7" width="2" height="1" fill="#000"/><rect x="17" y="8" width="2" height="1" fill="#000"/><rect x="20" y="8" width="2" height="1" fill="#000"/><rect x="18" y="9" width="3" height="1" fill="#000"/><rect x="19" y="10" width="1" height="1" fill="#000"/><rect x="18" y="11" width="3" height="1" fill="#000"/><rect x="17" y="12" width="2" height="1" fill="#000"/><rect x="20" y="12" width="2" height="1" fill="#000"/><rect x="17" y="13" width="2" height="1" fill="#000"/><rect x="20" y="13" width="2" height="1" fill="#000"/><rect x="17" y="14" width="2" height="1" fill="#000"/><rect x="20" y="14" width="2" height="1" fill="#000"/></svg></div>
<div class="btn" id="b668" style="left:668px"><svg width="25" height="24" viewBox="0 0 25 24" shape-rendering="crispEdges"><rect x="5" y="7" width="2" height="1" fill="#000"/><rect x="4" y="8" width="4" height="1" fill="#000"/><rect x="4" y="9" width="4" height="1" fill="#000"/><rect x="3" y="10" width="2" height="1" fill="#000"/><rect x="7" y="10" width="2" height="1" fill="#000"/><rect x="3" y="11" width="2" height="1" fill="#000"/><rect x="7" y="11" width="2" height="1" fill="#000"/><rect x="3" y="12" width="6" height="1" fill="#000"/><rect x="3" y="13" width="2" height="1" fill="#000"/><rect x="7" y="13" width="2" height="1" fill="#000"/><rect x="3" y="14" width="2" height="1" fill="#000"/><rect x="7" y="14" width="2" height="1" fill="#000"/><rect x="10" y="7" width="2" height="1" fill="#000"/><rect x="14" y="7" width="2" height="1" fill="#000"/><rect x="10" y="8" width="2" height="1" fill="#000"/><rect x="14" y="8" width="2" height="1" fill="#000"/><rect x="10" y="9" width="2" height="1" fill="#000"/><rect x="14" y="9" width="2" height="1" fill="#000"/><rect x="10" y="10" width="2" height="1" fill="#000"/><rect x="14" y="10" width="2" height="1" fill="#000"/><rect x="11" y="11" width="4" height="1" fill="#000"/><rect x="11" y="12" width="4" height="1" fill="#000"/><rect x="12" y="13" width="2" height="1" fill="#000"/><rect x="12" y="14" width="2" height="1" fill="#000"/><rect x="18" y="7" width="4" height="1" fill="#000"/><rect x="17" y="8" width="5" height="1" fill="#000"/><rect x="17" y="9" width="2" height="1" fill="#000"/><rect x="17" y="10" width="2" height="1" fill="#000"/><rect x="17" y="11" width="2" height="1" fill="#000"/><rect x="20" y="11" width="2" height="1" fill="#000"/><rect x="17" y="12" width="2" height="1" fill="#000"/><rect x="21" y="12" width="1" height="1" fill="#000"/><rect x="17" y="13" width="5" height="1" fill="#000"/><rect x="18" y="14" width="4" height="1" fill="#000"/></svg></div>
<svg class="a" style="left:0;top:0" width="768" height="530" viewBox="0 0 768 530"><g shape-rendering="crispEdges"><rect x="97" y="95" width="663" height="350" fill="#000"/><rect x="97" y="95" width="1" height="1" fill="#999966"/><path d="M102.5 100 V443" stroke="#C4C4C4" stroke-width="1" stroke-dasharray="3 3" fill="none"/><path d="M118.5 100 V443" stroke="#C4C4C4" stroke-width="1" stroke-dasharray="3 3" fill="none"/><path d="M223.5 100 V443" stroke="#C4C4C4" stroke-width="1" stroke-dasharray="3 3" fill="none"/><path d="M277.5 100 V443" stroke="#C4C4C4" stroke-width="1" stroke-dasharray="3 3" fill="none"/><path d="M315.5 100 V443" stroke="#C4C4C4" stroke-width="1" stroke-dasharray="3 3" fill="none"/><path d="M344.5 100 V443" stroke="#C4C4C4" stroke-width="1" stroke-dasharray="3 3" fill="none"/><path d="M368.5 100 V443" stroke="#C4C4C4" stroke-width="1" stroke-dasharray="3 3" fill="none"/><path d="M389.5 100 V443" stroke="#C4C4C4" stroke-width="1" stroke-dasharray="3 3" fill="none"/><path d="M406.5 100 V443" stroke="#C4C4C4" stroke-width="1" stroke-dasharray="3 3" fill="none"/><path d="M422.5 100 V443" stroke="#C4C4C4" stroke-width="1" stroke-dasharray="3 3" fill="none"/><path d="M527.5 100 V443" stroke="#C4C4C4" stroke-width="1" stroke-dasharray="3 3" fill="none"/><path d="M581.5 100 V443" stroke="#C4C4C4" stroke-width="1" stroke-dasharray="3 3" fill="none"/><path d="M619.5 100 V443" stroke="#C4C4C4" stroke-width="1" stroke-dasharray="3 3" fill="none"/><path d="M648.5 100 V443" stroke="#C4C4C4" stroke-width="1" stroke-dasharray="3 3" fill="none"/><path d="M672.5 100 V443" stroke="#C4C4C4" stroke-width="1" stroke-dasharray="3 3" fill="none"/><path d="M692.5 100 V443" stroke="#C4C4C4" stroke-width="1" stroke-dasharray="3 3" fill="none"/><path d="M710.5 100 V443" stroke="#C4C4C4" stroke-width="1" stroke-dasharray="3 3" fill="none"/><path d="M726.5 100 V443" stroke="#C4C4C4" stroke-width="1" stroke-dasharray="3 3" fill="none"/><path d="M99 120.5 H760" stroke-dashoffset="1" stroke="#C4C4C4" stroke-width="1" stroke-dasharray="3 3" fill="none"/><path d="M99 162.5 H760" stroke-dashoffset="1" stroke="#C4C4C4" stroke-width="1" stroke-dasharray="3 3" fill="none"/><path d="M99 204.5 H760" stroke-dashoffset="1" stroke="#C4C4C4" stroke-width="1" stroke-dasharray="3 3" fill="none"/><path d="M99 247.5 H760" stroke-dashoffset="1" stroke="#C4C4C4" stroke-width="1" stroke-dasharray="3 3" fill="none"/><path d="M99 289.5 H760" stroke-dashoffset="1" stroke="#C4C4C4" stroke-width="1" stroke-dasharray="3 3" fill="none"/><path d="M99 331.5 H760" stroke-dashoffset="1" stroke="#C4C4C4" stroke-width="1" stroke-dasharray="3 3" fill="none"/><path d="M99 373.5 H760" stroke-dashoffset="1" stroke="#C4C4C4" stroke-width="1" stroke-dasharray="3 3" fill="none"/><path d="M99 416.5 H760" stroke-dashoffset="1" stroke="#C4C4C4" stroke-width="1" stroke-dasharray="3 3" fill="none"/><rect x="98" y="187" width="662" height="1" fill="#FF0000"/></g><polyline shape-rendering="crispEdges" points="97,443.5 416.7,443.5 422.2,380 428.4,245 434.2,157.4 440.0,178 443.7,245 445.3,282 448,345 450.5,417 450.5,443.5 760,443.5" fill="none" stroke="#0000FF" stroke-width="2" stroke-linejoin="miter"/><g shape-rendering="crispEdges"><rect x="131" y="97" width="2" height="346" fill="#C0C0C0"/><rect x="435" y="97" width="2" height="346" fill="#C0C0C0"/><rect x="739" y="97" width="2" height="346" fill="#C0C0C0"/></g><g shape-rendering="crispEdges"><rect x="709" y="96" width="51" height="36" fill="#000"/><rect x="709.5" y="96.5" width="50" height="35" fill="none" stroke="#fff" stroke-width="1"/><rect x="710" y="108" width="49" height="2" fill="#fff"/><rect x="758" y="97" width="1" height="12" fill="#fff"/><rect x="711" y="102" width="21" height="2" fill="#0000FF"/><rect x="711" y="119" width="20" height="1" fill="#FF0000"/><rect x="80" y="177" width="7" height="267" fill="#002800"/><rect x="81" y="178" width="5" height="265" fill="#00FF00"/><rect x="80" y="147" width="7" height="4" fill="#400000"/><rect x="81" y="148" width="5" height="2" fill="#FF0000"/></g></svg>
<div class="t" id="lg1" style="left:732.5px;top:99px;font-size:10px;color:#fff">Ch#1</div>
<div class="t" id="lg2" style="left:732.5px;top:115px;font-size:10px;color:#fff;letter-spacing:0.3px">-3dB</div>
<div class="t ax" style="right:690.4px;top:114px">5</div>
<div class="t ax" style="right:690.4px;top:156px">0</div>
<div class="t ax" style="right:690.4px;top:198px">-5</div>
<div class="t ax" style="right:690.4px;top:241px">-10</div>
<div class="t ax" style="right:690.4px;top:283px">-15</div>
<div class="t ax" style="right:690.4px;top:325px">-20</div>
<div class="t ax" style="right:690.4px;top:367px">-25</div>
<div class="t ax" style="right:690.4px;top:410px">-30</div>
<div class="t axs" style="left:82.0px;width:40px;text-align:center;top:450px">80</div>
<div class="t axs" style="left:203.0px;width:40px;text-align:center;top:450px">200</div>
<div class="t axs" style="left:294.0px;width:40px;text-align:center;top:450px">400</div>
<div class="t axs" style="left:346.8px;width:40px;text-align:center;top:450px">600</div>
<div class="t axs" style="left:384.7px;width:40px;text-align:center;top:450px">800</div>
<div class="t axs" style="left:507.0px;width:40px;text-align:center;top:450px">2k</div>
<div class="t axs" style="left:598.5px;width:40px;text-align:center;top:450px">4k</div>
<div class="t axs" style="left:652.1px;width:40px;text-align:center;top:450px">6k</div>
<div class="t axs" style="left:690.0px;width:40px;text-align:center;top:450px">8k</div>
<div class="t ax" style="left:111.5px;width:40px;text-align:center;top:459px;">100</div>
<div class="t ax" style="left:415.5px;width:40px;text-align:center;top:459px;letter-spacing:0.5px;">1k</div>
<div class="t ax" style="left:719.5px;width:40px;text-align:center;top:459px;letter-spacing:0.6px;left:720.5px;">10k</div>
<div class="t" id="xl" style="left:383px;top:475px;font-size:13px;font-weight:bold">frequency [Hz]</div>
<div class="t" id="yl" style="left:10px;top:300px;font-size:14px;letter-spacing:0.4px;font-weight:bold;transform:rotate(-90deg);transform-origin:0 0">[dB]</div>
<div class="a" style="left:8px;top:466px;width:73px;height:38px;background:#fff"></div>
<svg class="a" style="left:8px;top:466px" width="73" height="38" viewBox="0 0 73 38" shape-rendering="crispEdges"><rect x="1.49" y="17.53" width="3.14" height="5.73" fill="#FF3030" shape-rendering="geometricPrecision"/><rect x="4.43" y="15.24" width="3.14" height="11.46" fill="#FF3030" shape-rendering="geometricPrecision"/><rect x="7.38" y="18.68" width="3.14" height="6.30" fill="#FF3030" shape-rendering="geometricPrecision"/><rect x="10.32" y="16.96" width="3.14" height="6.30" fill="#FF3030" shape-rendering="geometricPrecision"/><rect x="13.27" y="14.44" width="3.14" height="11.69" fill="#FF3030" shape-rendering="geometricPrecision"/><rect x="16.21" y="11.80" width="3.14" height="6.88" fill="#FF3030" shape-rendering="geometricPrecision"/><rect x="19.16" y="10.08" width="3.14" height="6.88" fill="#FF3030" shape-rendering="geometricPrecision"/><rect x="22.10" y="8.02" width="3.14" height="11.80" fill="#FF3030" shape-rendering="geometricPrecision"/><rect x="25.05" y="12.38" width="3.14" height="12.03" fill="#FF3030" shape-rendering="geometricPrecision"/><rect x="27.99" y="13.52" width="3.14" height="11.46" fill="#FF3030" shape-rendering="geometricPrecision"/><rect x="30.94" y="12.15" width="3.14" height="6.53" fill="#FF3030" shape-rendering="geometricPrecision"/><rect x="33.88" y="10.08" width="3.14" height="12.03" fill="#FF3030" shape-rendering="geometricPrecision"/><rect x="36.83" y="7.22" width="3.14" height="11.46" fill="#FF3030" shape-rendering="geometricPrecision"/><rect x="39.77" y="4.93" width="3.14" height="13.75" fill="#FF3030" shape-rendering="geometricPrecision"/><rect x="42.72" y="2.06" width="3.14" height="12.03" fill="#FF3030" shape-rendering="geometricPrecision"/><rect x="45.66" y="6.07" width="3.14" height="12.26" fill="#FF3030" shape-rendering="geometricPrecision"/><rect x="48.61" y="8.94" width="3.14" height="6.88" fill="#FF3030" shape-rendering="geometricPrecision"/><rect x="51.55" y="11.80" width="3.14" height="6.53" fill="#FF3030" shape-rendering="geometricPrecision"/><rect x="54.50" y="12.95" width="3.14" height="12.03" fill="#FF3030" shape-rendering="geometricPrecision"/><rect x="57.44" y="8.94" width="3.14" height="11.69" fill="#FF3030" shape-rendering="geometricPrecision"/><rect x="60.39" y="11.23" width="3.14" height="6.30" fill="#FF3030" shape-rendering="geometricPrecision"/><rect x="63.33" y="12.95" width="3.14" height="6.88" fill="#FF3030" shape-rendering="geometricPrecision"/><rect x="66.28" y="11.80" width="3.14" height="11.11" fill="#FF3030" shape-rendering="geometricPrecision"/><rect x="69.22" y="15.24" width="3.14" height="5.73" fill="#FF3030" shape-rendering="geometricPrecision"/><rect x="72.17" y="16.96" width="3.14" height="5.73" fill="#FF3030" shape-rendering="geometricPrecision"/></svg>
<div class="t" id="lgo" style="left:8.5px;top:494px;font-size:10px;transform:scaleX(0.905);transform-origin:0 0;-webkit-text-stroke:0.25px #000">Dr-Jordan-Design</div>
<div class="t" id="rdy" style="left:7px;top:511px;font-size:11px;-webkit-text-stroke:0.15px #000">Ready</div>
<div class="sp" style="left:476px;width:43px"></div>
<div class="t" style="left:478px;top:511px;font-size:11px;-webkit-text-stroke:0.15px #000;">44100</div>
<div class="sp" style="left:520px;width:59px"></div>
<div class="t" style="left:520px;width:59px;text-align:center;top:511px;font-size:11px;-webkit-text-stroke:0.15px #000">1024</div>
<div class="sp" style="left:581px;width:43px"></div>
<div class="t" style="left:583px;top:511px;font-size:11px;-webkit-text-stroke:0.15px #000;">46ms</div>
<div class="sp" style="left:626px;width:27px"></div>
<div class="sp" style="left:654px;width:89px"></div>
<div class="t" style="left:655px;top:511px;font-size:11px;-webkit-text-stroke:0.15px #000;letter-spacing:-0.3px;">Blackman</div>
<svg class="a" style="left:746px;top:511px" width="16" height="16" viewBox="0 0 16 16"><g stroke-width="1.4" fill="none"><path d="M3 15 L15 3 M7 15 L15 7 M11 15 L15 11" stroke="#fff" transform="translate(-1,0)"/><path d="M3 15 L15 3 M7 15 L15 7 M11 15 L15 11" stroke="#B0AC98"/></g></svg>
</body></html>
